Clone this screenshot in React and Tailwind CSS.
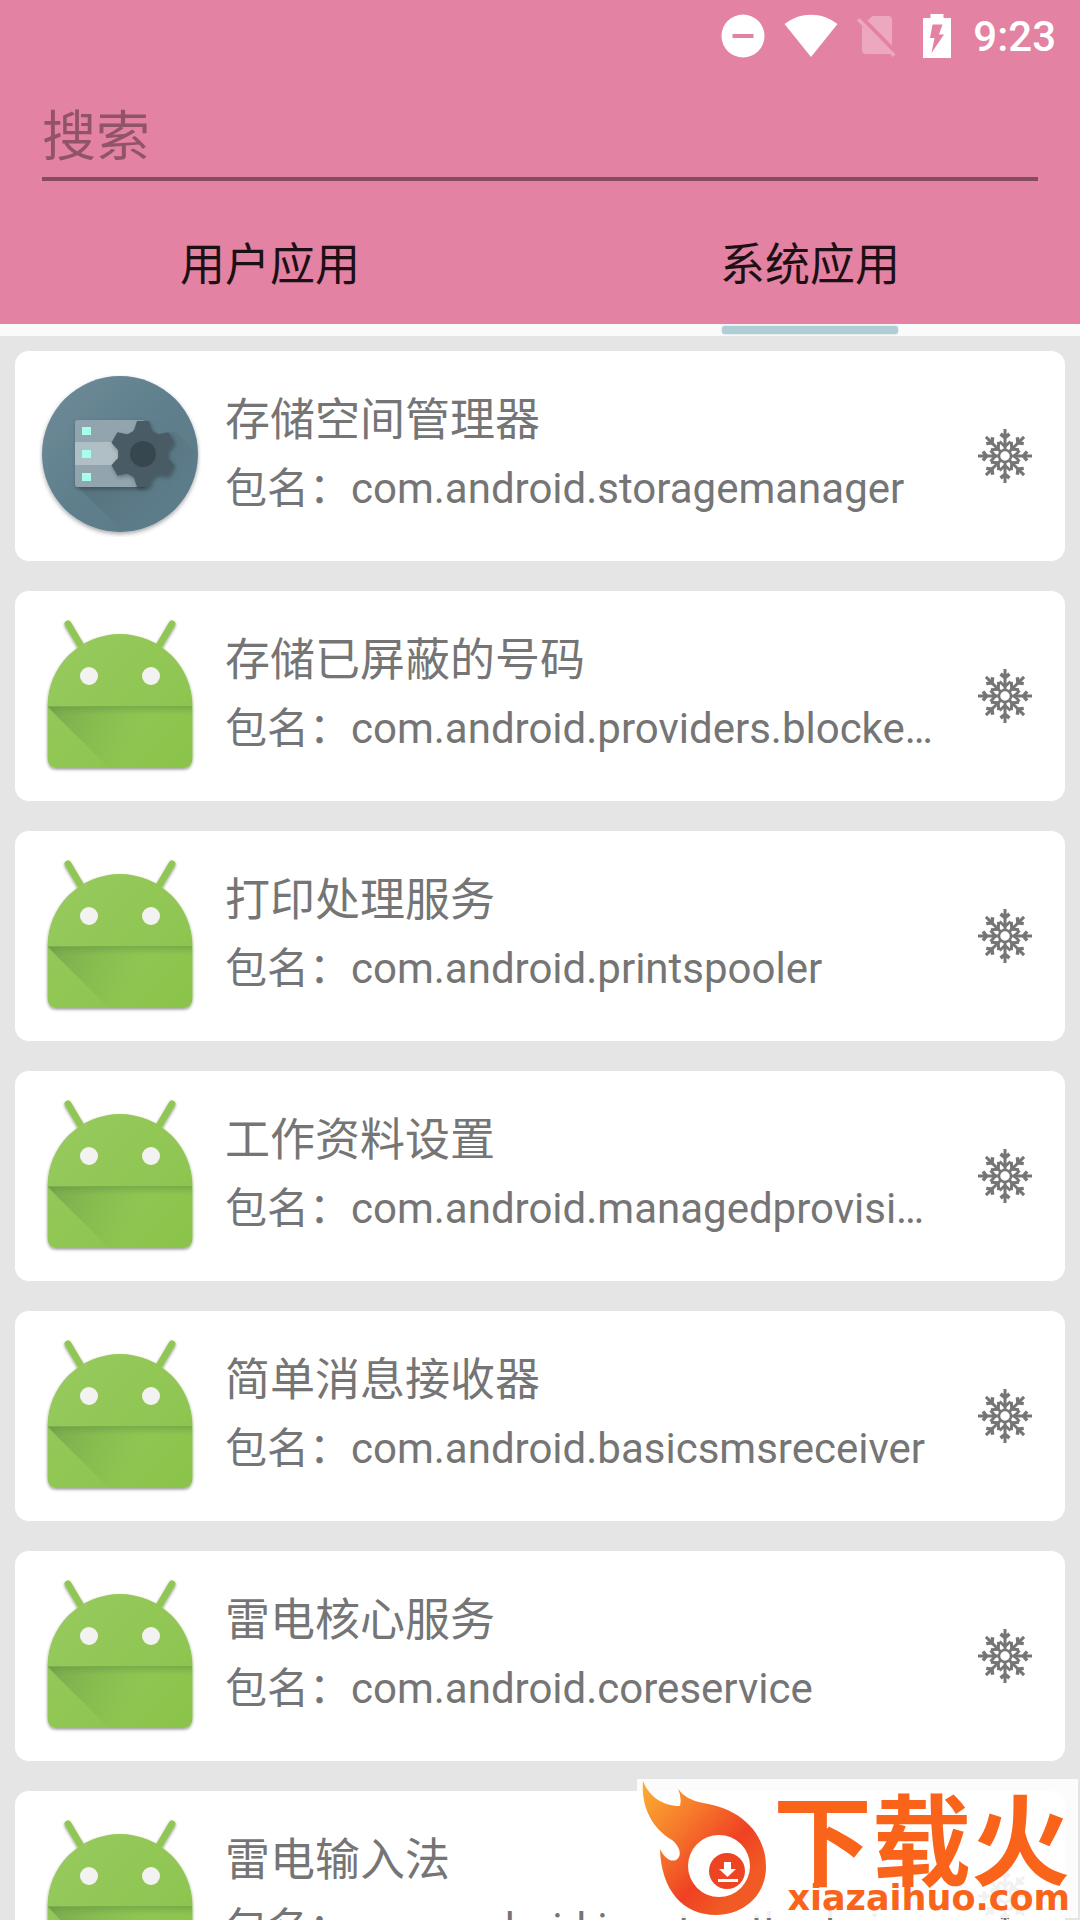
import React from "react";

const apps = [
  { name: "存储空间管理器", pkg: "com.android.storagemanager", storage: true },
  { name: "存储已屏蔽的号码", pkg: "com.android.providers.blockednumber" },
  { name: "打印处理服务", pkg: "com.android.printspooler" },
  { name: "工作资料设置", pkg: "com.android.managedprovisioning" },
  { name: "简单消息接收器", pkg: "com.android.basicsmsreceiver" },
  { name: "雷电核心服务", pkg: "com.android.coreservice" },
  { name: "雷电输入法", pkg: "com.android.inputmethod.pinyin" },
];

const gearAngles = [0, 60, 120, 180, 240, 300];
const armAngles = [0, 45, 90, 135, 180, 225, 270, 315];

function StatusBar() {
  return (
    <div className="flex h-[72px] items-center justify-end pr-[24px] text-white">
      <svg className="size-[44px]" viewBox="0 0 44 44" aria-hidden="true">
        <circle cx="22" cy="22" r="21.500" fill="currentColor" />
        <rect x="11.500" y="20" width="21" height="4" fill="#e382a2" />
      </svg>
      <svg className="ml-[19px] h-[44px] w-[54px]" viewBox="0 0 54 44" aria-hidden="true">
        <path d="M.5 10C16-2.500 38-2.500 53.500 10L27 43Z" fill="currentColor" />
      </svg>
      <svg className="ml-[18px] h-[44px] w-[40px]" viewBox="0 0 40 44" fill="#fff" fillOpacity=".31" aria-hidden="true">
        <path d="M11.500 6.500 16.500 2H32q4 0 4 4v25.500ZM6 12 34.500 40H10q-4 0-4-4Z" />
        <path d="M3.500 4 1 6.500 37 43 39.500 40.500Z" />
      </svg>
      <svg className="ml-[27px] h-[44px] w-[28px]" viewBox="0 0 28 44" aria-hidden="true">
        <path d="M7.500 0h13v4H28v40H0V4h7.500Z" fill="currentColor" />
        <path d="M9.500 10.500h10L16 20.500h5L8.500 39l3-15H7Z" fill="#e382a2" />
      </svg>
      <span className="ml-[22px] pt-[2px] font-[Roboto,sans-serif] text-[42px] leading-[44px] font-medium">9:23</span>
    </div>
  );
}

function StorageIcon() {
  return (
    <svg className="h-[162px] w-[162px]" viewBox="0 2 162 162" aria-hidden="true">
      <defs>
        <linearGradient id="disc" x1="0" y1="0" x2="1" y2="1">
          <stop offset="0" stopColor="#6f8b98" />
          <stop offset=".5" stopColor="#5f7f8d" />
          <stop offset="1" stopColor="#5b7987" />
        </linearGradient>
        <linearGradient id="cast" x1="40" y1="70" x2="110" y2="140" gradientUnits="userSpaceOnUse">
          <stop offset="0" stopColor="#37474f" stopOpacity=".35" />
          <stop offset="1" stopColor="#37474f" stopOpacity="0" />
        </linearGradient>
        <filter id="discShadow" x="-20%" y="-20%" width="140%" height="140%">
          <feDropShadow dx="0" dy="2" stdDeviation="2" floodOpacity=".35" />
        </filter>
        <filter id="partShadow" x="-20%" y="-20%" width="150%" height="150%">
          <feDropShadow dx="1" dy="2" stdDeviation="2" floodOpacity=".3" />
        </filter>
        <clipPath id="discClip"><circle cx="81" cy="81" r="78" /></clipPath>
      </defs>
      <circle cx="81" cy="81" r="78" fill="url(#disc)" filter="url(#discShadow)" />
      <path d="M37 112 94 169h80V97L136 58Z" fill="url(#cast)" clipPath="url(#discClip)" />
      <g filter="url(#partShadow)">
        <rect x="36" y="47" width="70" height="67" rx="3" fill="#92a5ae" />
      </g>
      <path d="M36 69h44v23H36Z" fill="#b0bec5" />
      <path d="M43 54h9v8h-9zM43 77h9v8h-9zM43 100h9v8h-9z" fill="#a7ffeb" />
      <g filter="url(#partShadow)" fill="#4a5c65">
        <circle cx="104" cy="81" r="25" />
        {gearAngles.map((a) => (
          <path key={a} d="M90 63Q95 59 96 54L98 48H110L112 54Q113 59 118 63Z" transform={`rotate(${a} 104 81)`} />
        ))}
      </g>
      <circle cx="104" cy="81" r="13" fill="#37474f" />
    </svg>
  );
}

function AndroidIcon({ id }) {
  return (
    <svg className="h-[162px] w-[162px]" viewBox="0 1 162 162" aria-hidden="true">
      <defs>
        <linearGradient id={`body-${id}`} x1="0" y1="0" x2="1" y2="1">
          <stop offset="0" stopColor="#97ca60" />
          <stop offset="1" stopColor="#8bc34a" />
        </linearGradient>
        <linearGradient id={`fold-${id}`} x1="10" y1="93" x2="95" y2="130" gradientUnits="userSpaceOnUse">
          <stop offset="0" stopColor="#6f9e4a" stopOpacity=".75" />
          <stop offset="1" stopColor="#7cb342" stopOpacity="0" />
        </linearGradient>
        <linearGradient id={`edge-${id}`} x1="0" y1="0" x2="0" y2="1">
          <stop offset="0" stopColor="#5f9140" stopOpacity=".5" />
          <stop offset="1" stopColor="#6f9e4a" stopOpacity="0" />
        </linearGradient>
        <filter id={`shade-${id}`} x="-10%" y="-10%" width="120%" height="120%">
          <feDropShadow dx="0" dy="1.500" stdDeviation="1.500" floodOpacity=".4" />
        </filter>
      </defs>
      <g filter={`url(#shade-${id})`}>
        <path d="M29 10 45 37M133 10 117 37" stroke="#8fc654" strokeWidth="7" strokeLinecap="round" />
        <path d="M8.500 92a72.500 72 0 0 1 145 0v52q0 10-10 10h-125q-10 0-10-10Z" fill={`url(#body-${id})`} />
      </g>
      <path d="M8.500 93h145L110 154H70Z" fill={`url(#fold-${id})`} />
      <path d="M9 92h144v9H17Z" fill={`url(#edge-${id})`} />
      <circle cx="50" cy="62" r="9" fill="#f2f2f2" />
      <circle cx="112" cy="62" r="9" fill="#f2f2f2" />
    </svg>
  );
}

function Snowflake() {
  return (
    <svg className="size-[54px]" viewBox="0 0 54 54" fill="none" stroke="#757575" aria-hidden="true">
      <circle cx="27" cy="27" r="6" strokeWidth="2.500" />
      {armAngles.map((a) => (
        <g key={a} transform={`rotate(${a} 27 27)`}>
          <path d="M27 0V21" strokeWidth="3" />
          <path d="M22.500 5 27 8.500 31.500 5" strokeWidth="3.500" />
          <path d="M21.500 12.500 27 17.500 32.500 12.500" strokeWidth="3" />
        </g>
      ))}
    </svg>
  );
}

function AppCard({ app, index }) {
  return (
    <li className="flex h-[210px] shrink-0 items-center rounded-[14px] bg-white pr-[33px] pl-[24px]">
      {app.storage ? <StorageIcon /> : <AndroidIcon id={index} />}
      <div className="ml-[24px] flex min-w-0 flex-1 flex-col gap-[8px] pb-[2px] text-[#757575]">
        <h2 className="truncate text-[45px] leading-[60px]">{app.name}</h2>
        <p className="truncate text-[42px] leading-[60px]">包名：{app.pkg}</p>
      </div>
      <button type="button" aria-label={`冻结 ${app.name}`} className="ml-[36px]">
        <Snowflake />
      </button>
    </li>
  );
}

function Watermark() {
  return (
    <a
      href="#xiazaihuo"
      className="absolute right-[2px] bottom-[2px] flex h-[139px] w-[441px] bg-white/90 text-[#f9631a]"
    >
      <svg className="h-[139px] w-[131px] shrink-0" viewBox="0 0 131 139" aria-hidden="true">
        <defs>
          <linearGradient id="flame" x1="0" y1="0" x2=".8" y2=".8">
            <stop offset="0" stopColor="#fbb034" />
            <stop offset=".4" stopColor="#f6792b" />
            <stop offset=".75" stopColor="#ef4123" />
            <stop offset="1" stopColor="#f15a24" />
          </linearGradient>
        </defs>
        <path
          d="M6 2C12 17 25 27 43 27Q45 18 41 10Q49 21 66 24C101 29 129 52 129 88C129 116 107 136 79 136C46 136 24 111 23 70C28 80 34 83 39 81C45 78 44 68 35 61C13 48 4 25 6 2Z"
          fill="url(#flame)"
        />
        <circle cx="82" cy="87" r="31" fill="#fff" />
        <circle cx="90" cy="92" r="18" fill="#ed4424" />
        <path d="M87 83h7v7h5l-8.500 8-8.500-8h5ZM81 100h20v3H81Z" fill="#fff" />
      </svg>
      <span className="flex flex-1 flex-col items-end pt-[12px] pr-[8px]">
        <span className="font-['Noto_Sans_CJK_SC',sans-serif] text-[99px] leading-[88px] font-bold whitespace-nowrap">
          下载火
        </span>
        <span className="font-['DejaVu_Sans',sans-serif] text-[35px] leading-[38px] font-bold">xiazaihuo.com</span>
      </span>
    </a>
  );
}

export default function App() {
  return (
    <div className="relative flex h-screen flex-col overflow-hidden bg-[#e5e5e5] font-[Roboto,'Noto_Sans_CJK_SC',sans-serif]">
      <header className="shrink-0 bg-[#e382a2]">
        <StatusBar />
        <div className="px-[42px] pt-[24px]">
          <input
            type="text"
            aria-label="搜索"
            placeholder="搜索"
            className="block h-[85px] w-full border-b-4 border-[#854c5f] bg-transparent pt-[1px] text-[54px] text-black outline-none placeholder:text-[#915368]"
          />
        </div>
        <div role="tablist" className="grid h-[143px] grid-cols-2 text-[45px] text-[#1d1014]">
          <button type="button" role="tab" aria-selected="false" className="pt-[26px]">用户应用</button>
          <button type="button" role="tab" aria-selected="true" className="pt-[26px]">系统应用</button>
        </div>
      </header>
      <div className="grid h-[12px] shrink-0 grid-cols-2 bg-[#fafafa]">
        <span className="col-start-2 mt-[2px] h-[8px] w-[176px] justify-self-center rounded-[3px] bg-[#afcdd5] shadow-[0_0_2px_#afcdd5]" />
      </div>
      <ul className="flex min-h-0 flex-1 flex-col gap-[30px] px-[15px] pt-[15px]">
        {apps.map((app, i) => (
          <AppCard key={app.pkg} app={app} index={i} />
        ))}
      </ul>
      <Watermark />
    </div>
  );
}
